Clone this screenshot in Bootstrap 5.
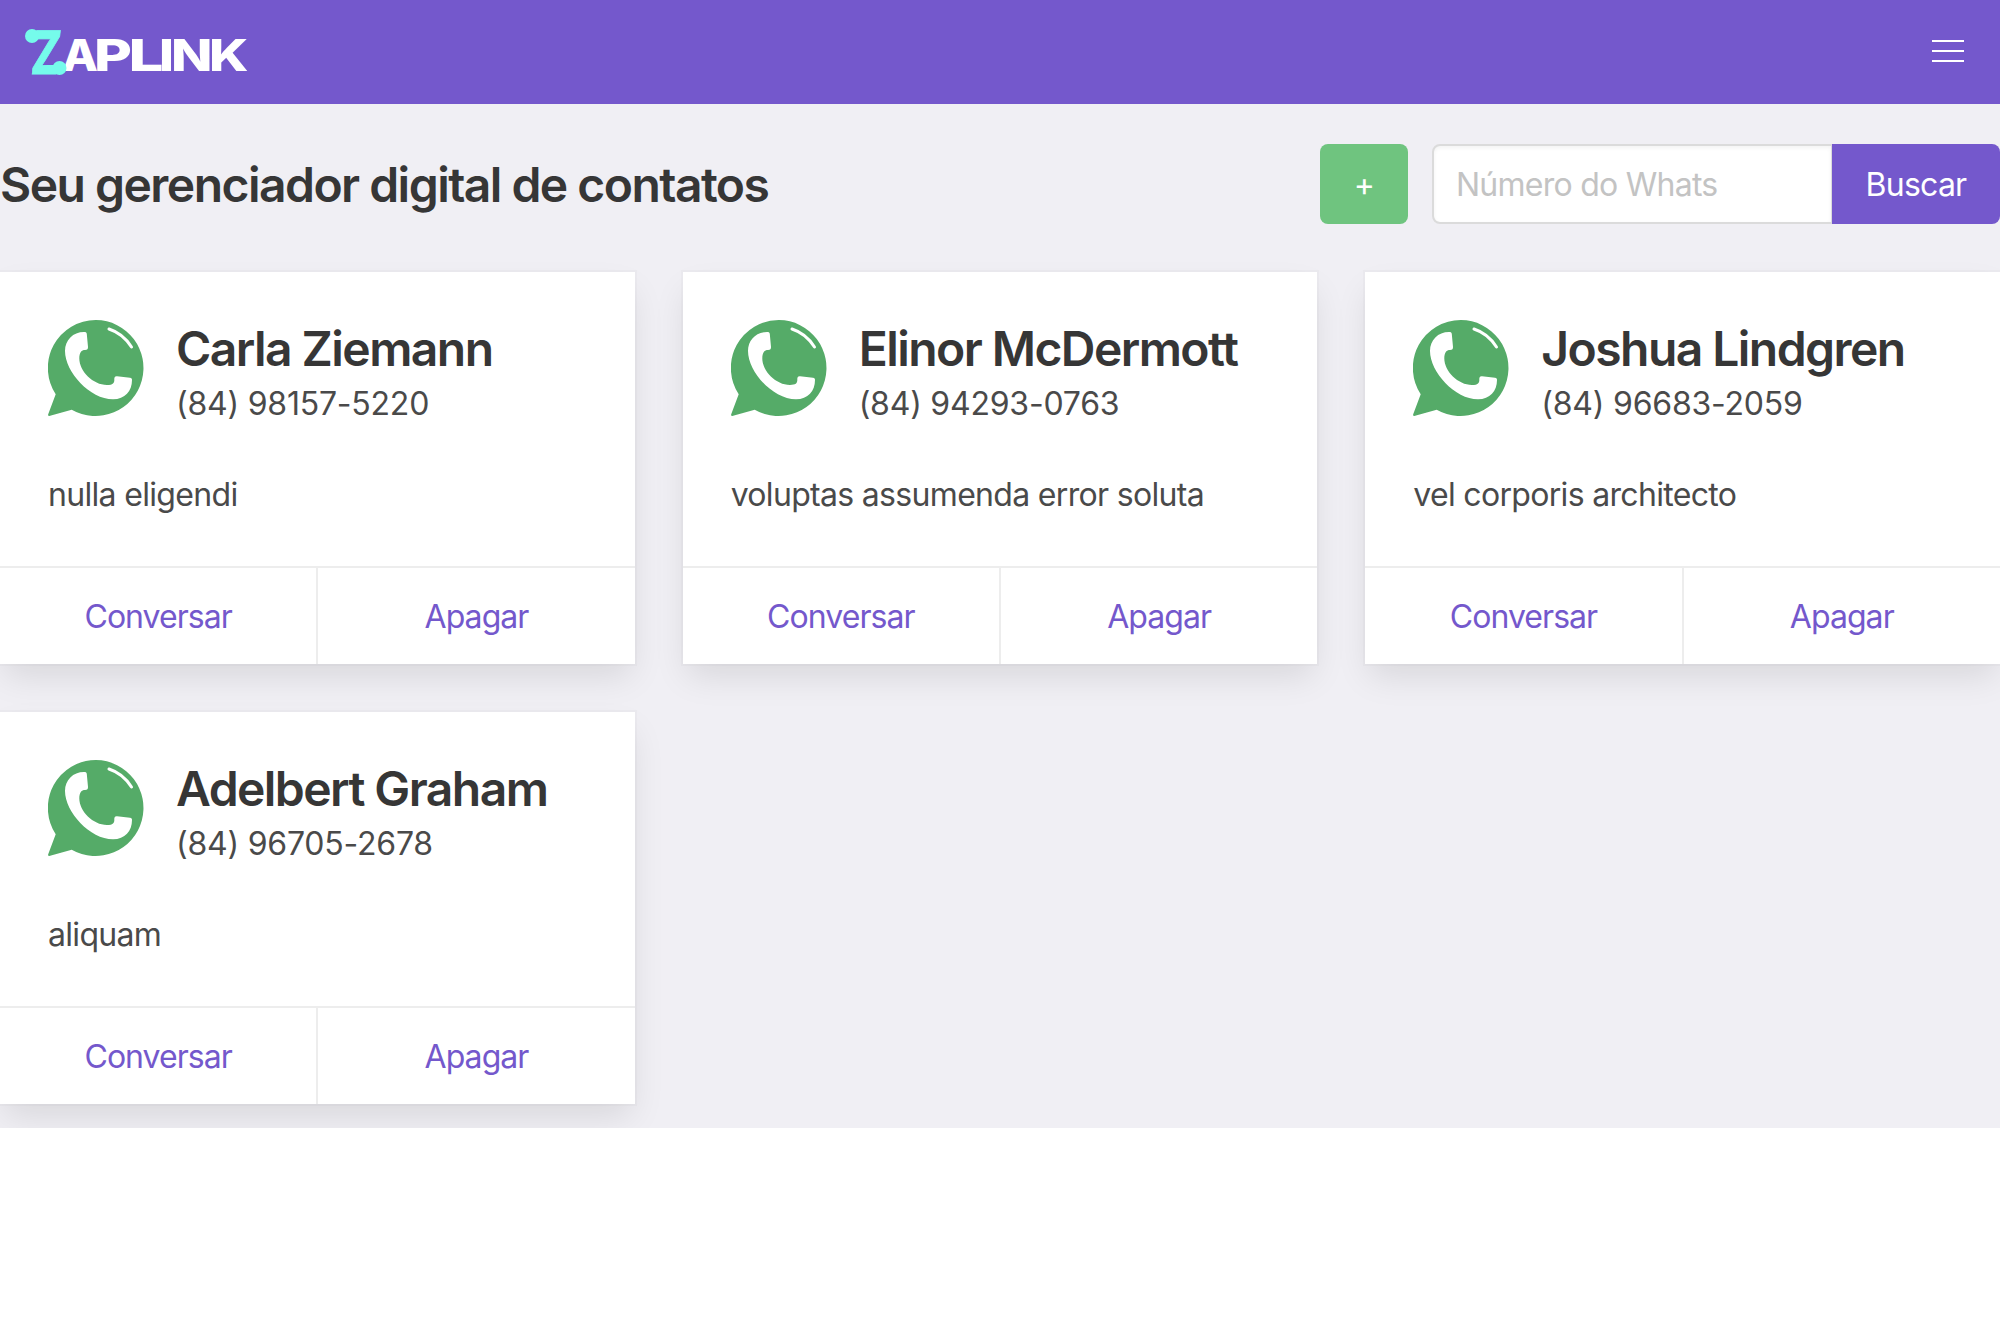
<!DOCTYPE html>
<html lang="pt-BR">
<head>
<meta charset="utf-8">
<meta name="viewport" content="width=device-width, initial-scale=1">
<title>Zaplink</title>
<link href="https://cdn.jsdelivr.net/npm/bootstrap@5.3.0/dist/css/bootstrap.min.css" rel="stylesheet">
<style>
body{font-family:Inter,"Liberation Sans",sans-serif;font-size:32px;line-height:48px;letter-spacing:-.68px;color:#4a4a4a;background:#fff;overflow-x:hidden}
.topbar{height:104px;background:#7458cc;padding:0 32px 0 0}
.brand-logo{width:280px;height:104px;letter-spacing:0}
.burger{width:40px;height:40px}
.panel{background:#f0eff4;padding:40px 0 24px}
.heading{font-size:48px;line-height:54px;font-weight:600;color:#363636;letter-spacing:-1.53px;padding-top:2px}
.btn-add,.btn-find{height:80px;font-size:32px;line-height:48px;color:#fff;border:0;border-radius:8px;letter-spacing:-.76px}
.btn-add{width:88px;background:#6fc47f}
.btn-find{width:168px;background:#7458cc}
.btn-add span,.btn-find span{display:block;padding-top:2px}
.finder{width:568px}
.finder .form-control{height:80px;border:2px solid #dbdbdb;border-radius:8px;font-size:32px;line-height:48px;letter-spacing:-.75px;padding:0 22px;box-shadow:inset 0 2px 4px rgba(10,10,10,.05)}
.finder .form-control::placeholder{color:#c3c3c3;opacity:1}
.contacts{--bs-gutter-x:48px;--bs-gutter-y:48px}
.contact{height:392px;border:0;border-radius:0;color:#4a4a4a;box-shadow:0 16px 32px -4px rgba(10,10,10,.1),0 0 0 2px rgba(10,10,10,.02)}
.contact .card-body{padding:48px 48px 44px}
.avatar{width:96px;height:96px;margin-right:32px}
.contact-name{font-size:48px;line-height:54px;font-weight:600;color:#363636;letter-spacing:-1.56px;margin-top:2px}
.contact-phone{letter-spacing:-.22px;margin-top:4px}
.contact-note{margin-top:43px}
.contact .card-footer{height:98px;border-top:2px solid #ededed;border-radius:0;background:#fff}
.contact .card-footer a{color:#7458cc;letter-spacing:-.95px;padding-top:2px}
.contact .card-footer a:first-child{min-width:calc(50% + 1px);border-right:2px solid #ededed}
</style>
</head>
<body>
<svg class="d-none" xmlns="http://www.w3.org/2000/svg">
<symbol id="whats" viewBox="0 0 96 96">
<path fill="#55ab68" d="M48 0a48 48 0 1 1-24.3 89.7L1.2 96Q-.3 96 .2 94.3L7.7 74.3A48 48 0 0 1 48 0z"/>
<path fill="#fff" d="M36 12C25 12 17 20 17 31C17 52 42 79.3 65 79.3C77 79.3 84 71 84 60C84 58.500 83.500 58 82 57.700L69 56.300C66.500 56.200 66.300 57.500 66.300 59.500C66.500 63 65 65 59 65C45 65 31.300 51 31.300 38.500C31.300 32.500 33.500 30 37 30C39.500 30 40 29 40 27L38.800 14C38.600 12.500 38 12 36 12z"/>
<path fill="none" stroke="#fff" stroke-width="3" stroke-linecap="round" d="M61 9Q75 13.500 83.500 27"/>
</symbol>
</svg>
<nav class="topbar d-flex align-items-center justify-content-between">
<svg class="brand-logo" viewBox="0 0 280 104" role="img" aria-label="Zaplink">
<text y="71" font-size="44" font-family="Inter, sans-serif" font-weight="800" fill="#fff"><tspan x="62" textLength="36" lengthAdjust="spacingAndGlyphs">A</tspan><tspan x="94" textLength="38" lengthAdjust="spacingAndGlyphs">P</tspan><tspan x="128.500" textLength="35" lengthAdjust="spacingAndGlyphs">L</tspan><tspan x="159" textLength="15" lengthAdjust="spacingAndGlyphs">I</tspan><tspan x="171" textLength="41.500" lengthAdjust="spacingAndGlyphs">N</tspan><tspan x="209" textLength="39.500" lengthAdjust="spacingAndGlyphs">K</tspan></text>
<text transform="translate(30 74) skewX(-6)" font-family="Inter, sans-serif" font-weight="800" font-size="60" fill="#75fbeb" textLength="28" lengthAdjust="spacingAndGlyphs" stroke="#75fbeb" stroke-width="1">Z</text>
<g fill="#75fbeb"><circle cx="32" cy="36" r="7"/><circle cx="59.500" cy="68" r="7"/></g>
</svg>
<svg class="burger" viewBox="0 0 40 40"><path d="M4 9h32M4 19h32M4 29h32" stroke="#fff" stroke-width="2"/></svg>
</nav>
<main class="panel">
<div class="d-flex align-items-center justify-content-between mb-5">
<h1 class="heading mb-0">Seu gerenciador digital de contatos</h1>
<div class="d-flex gap-4">
<button class="btn btn-add p-0" type="button"><span>+</span></button>
<div class="input-group finder"><input class="form-control" type="text" placeholder="Número do Whats"><button class="btn btn-find p-0" type="button"><span>Buscar</span></button></div>
</div>
</div>
<div class="row row-cols-3 contacts">
<div class="col"><div class="card contact">
<div class="card-body"><div class="d-flex"><svg class="avatar"><use href="#whats"/></svg><div><h2 class="contact-name mb-0">Carla Ziemann</h2><div class="contact-phone">(84) 98157-5220</div></div></div><p class="contact-note mb-0">nulla eligendi</p></div>
<div class="card-footer d-flex p-0"><a href="#" class="w-50 d-flex align-items-center justify-content-center text-decoration-none">Conversar</a><a href="#" class="w-50 d-flex align-items-center justify-content-center text-decoration-none">Apagar</a></div>
</div></div>
<div class="col"><div class="card contact">
<div class="card-body"><div class="d-flex"><svg class="avatar"><use href="#whats"/></svg><div><h2 class="contact-name mb-0">Elinor McDermott</h2><div class="contact-phone">(84) 94293-0763</div></div></div><p class="contact-note mb-0">voluptas assumenda error soluta</p></div>
<div class="card-footer d-flex p-0"><a href="#" class="w-50 d-flex align-items-center justify-content-center text-decoration-none">Conversar</a><a href="#" class="w-50 d-flex align-items-center justify-content-center text-decoration-none">Apagar</a></div>
</div></div>
<div class="col"><div class="card contact">
<div class="card-body"><div class="d-flex"><svg class="avatar"><use href="#whats"/></svg><div><h2 class="contact-name mb-0">Joshua Lindgren</h2><div class="contact-phone">(84) 96683-2059</div></div></div><p class="contact-note mb-0">vel corporis architecto</p></div>
<div class="card-footer d-flex p-0"><a href="#" class="w-50 d-flex align-items-center justify-content-center text-decoration-none">Conversar</a><a href="#" class="w-50 d-flex align-items-center justify-content-center text-decoration-none">Apagar</a></div>
</div></div>
<div class="col"><div class="card contact">
<div class="card-body"><div class="d-flex"><svg class="avatar"><use href="#whats"/></svg><div><h2 class="contact-name mb-0">Adelbert Graham</h2><div class="contact-phone">(84) 96705-2678</div></div></div><p class="contact-note mb-0">aliquam</p></div>
<div class="card-footer d-flex p-0"><a href="#" class="w-50 d-flex align-items-center justify-content-center text-decoration-none">Conversar</a><a href="#" class="w-50 d-flex align-items-center justify-content-center text-decoration-none">Apagar</a></div>
</div></div>
</div>
</main>
<script src="https://cdn.jsdelivr.net/npm/bootstrap@5.3.0/dist/js/bootstrap.bundle.min.js"></script>
</body>
</html>
